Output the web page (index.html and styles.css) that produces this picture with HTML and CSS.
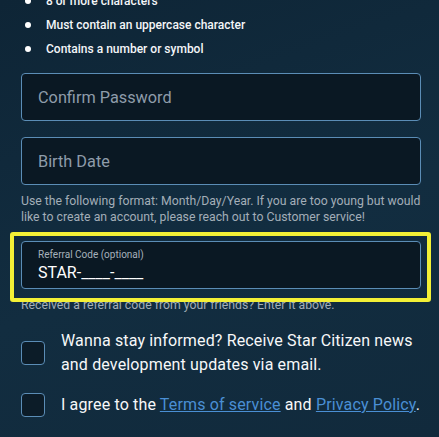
FILE: index.html
```html
<!DOCTYPE html>
<html lang="en">
<head>
<meta charset="utf-8">
<link rel="stylesheet" href="styles.css">
</head>
<body>
<div class="form">
  <ul class="rules">
    <li>8 or more characters</li>
    <li>Must contain an uppercase character</li>
    <li>Contains a number or symbol</li>
  </ul>
  <div class="field"><span class="placeholder">Confirm Password</span></div>
  <div class="field field-gap"><span class="placeholder">Birth Date</span></div>
  <p class="help wide">Use the following format: Month/Day/Year. If you are too young but would<br>like to create an account, please reach out to Customer service!</p>
  <div class="referral-wrap">
    <div class="field referral">
      <span class="label">Referral Code (optional)</span>
      <span class="value">STAR-____-____</span>
    </div>
    <div class="highlight"></div>
  </div>
  <p class="help">Received a referral code from your friends? Enter it above.</p>
  <label class="check first">
    <span class="box"></span>
    <span class="check-text">Wanna stay informed? Receive Star Citizen news and development updates via email.</span>
  </label>
  <label class="check">
    <span class="box"></span>
    <span class="check-text">I agree to the <a href="#">Terms of service</a> and <a href="#">Privacy Policy</a>.</span>
  </label>
</div>
</body>
</html>
```
FILE: styles.css
```css
html, body {
  margin: 0;
  padding: 0;
  height: 100%;
  overflow: hidden;
}
body {
  background: linear-gradient(160deg, #0e2536 0%, #122d40 55%, #112a3c 100%);
  font-family: Roboto, "Liberation Sans", sans-serif;
  color: #ffffff;
}
.form {
  width: 400px;
  padding-left: 21px;
  margin-top: -11px;
}
.rules {
  list-style: none;
  margin: 0 0 12px 0;
  padding: 0;
}
.rules li {
  position: relative;
  height: 24px;
  line-height: 24px;
  font-size: 12px;
  font-weight: 500;
  padding-left: 25px;
  color: #f4f6f8;
}
.rules li::before {
  content: "";
  position: absolute;
  left: 4px;
  top: 9px;
  width: 6px;
  height: 6px;
  border-radius: 50%;
  background: #ffffff;
}
.field {
  box-sizing: border-box;
  height: 48px;
  border: 1px solid #5b8db6;
  border-radius: 4px;
  background: #0a1823;
  display: flex;
  align-items: center;
  padding-left: 16px;
}
.field-gap {
  margin-top: 16px;
}
.placeholder {
  font-size: 16.3px;
  color: #8e9caa;
}
.help {
  margin: 8px 0 0 0;
  font-size: 12.25px;
  line-height: 16px;
  color: #a3aeb8;
}
.wide {
  white-space: nowrap;
}
.referral-wrap {
  position: relative;
  margin-top: 16px;
}
.referral {
  flex-direction: column;
  align-items: flex-start;
  justify-content: center;
  padding-top: 1px;
}
.label {
  font-size: 10px;
  line-height: 12px;
  color: #a6b1bb;
}
.value {
  font-size: 16px;
  line-height: 20px;
  color: #ffffff;
  margin-top: 2px;
}
.highlight {
  position: absolute;
  left: -11px;
  top: -9px;
  width: 421px;
  height: 70px;
  box-sizing: border-box;
  border: 4px solid #f3f036;
  border-radius: 3px;
  pointer-events: none;
}
.check {
  display: flex;
  align-items: center;
  gap: 16px;
  margin-top: 16px;
  font-size: 16px;
  letter-spacing: 0.15px;
  line-height: 24px;
  color: #f7f8f9;
}
.box {
  flex: 0 0 auto;
  box-sizing: border-box;
  width: 24px;
  height: 24px;
  border: 1px solid #5b8db6;
  border-radius: 4px;
  background: #0c1c28;
}
.check-text a {
  color: #4a8fd4;
  text-decoration: underline;
}
```
